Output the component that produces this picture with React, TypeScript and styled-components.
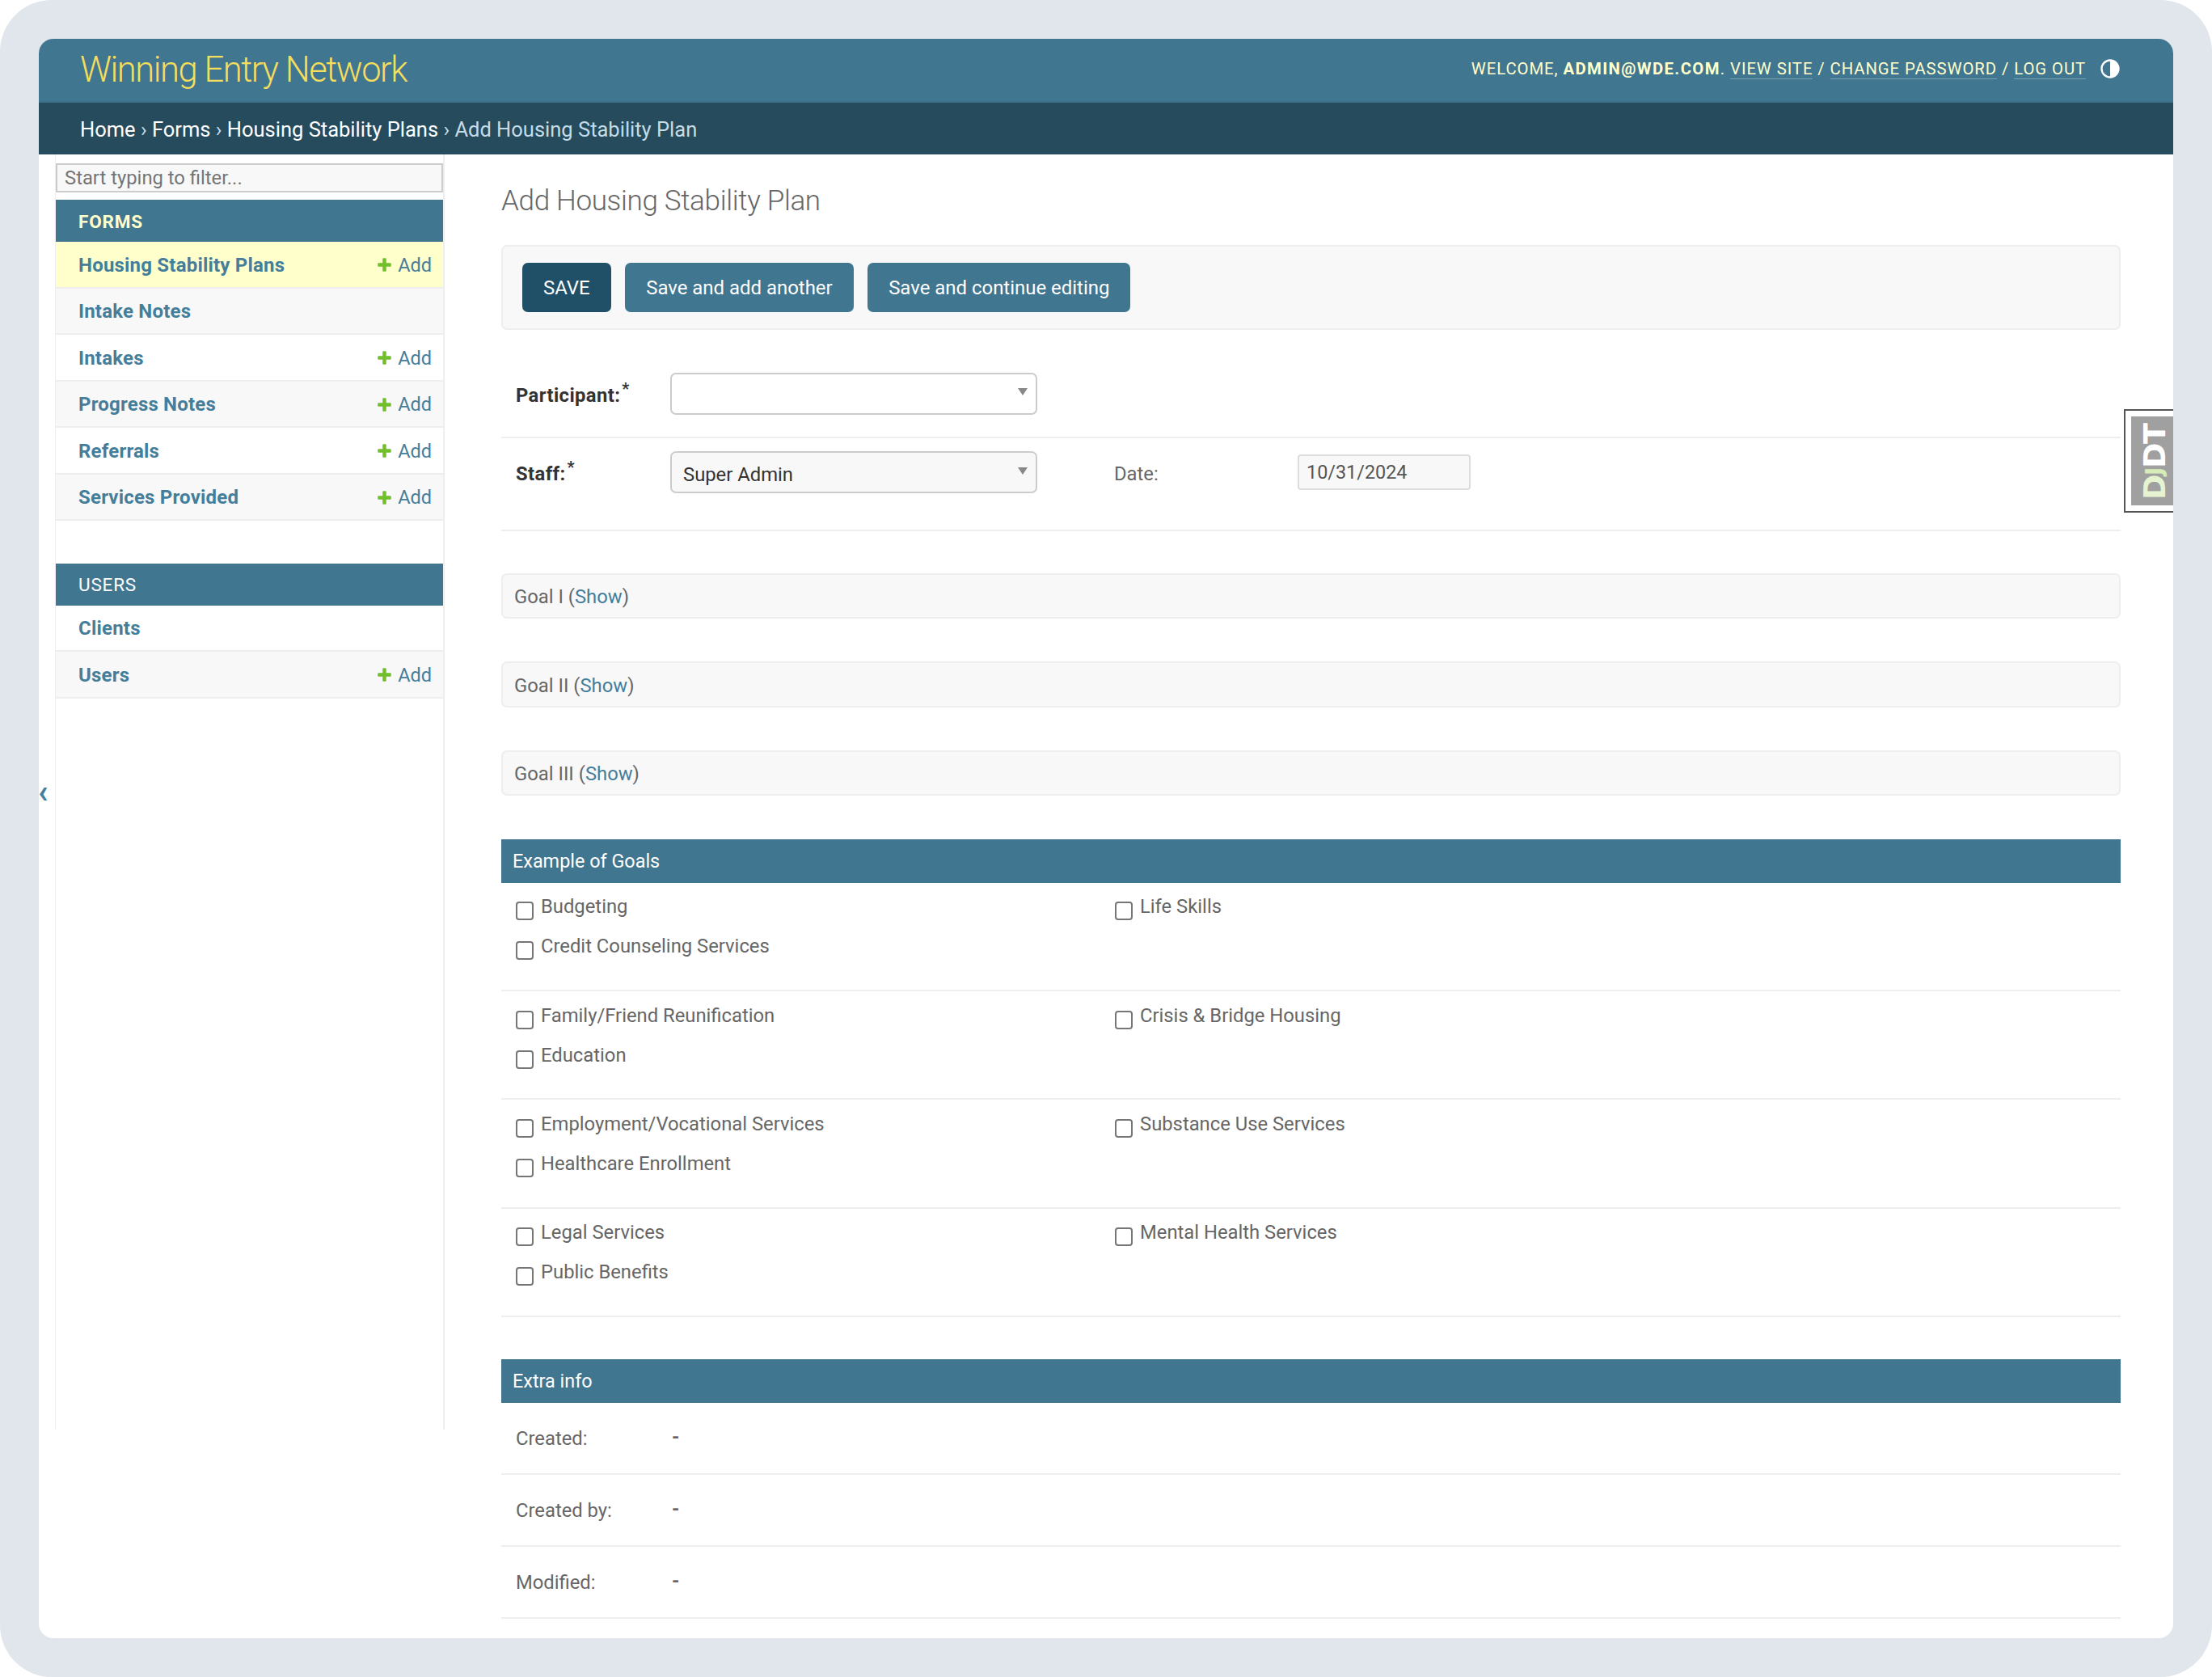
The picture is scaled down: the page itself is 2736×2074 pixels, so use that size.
import styled, { createGlobalStyle } from "styled-components";

const GlobalStyle = createGlobalStyle`
  html, body {
    margin: 0;
    padding: 0;
    background: #fff;
    overflow: hidden;
  }
  * {
    box-sizing: border-box;
  }
  body {
    font-family: Roboto, "Liberation Sans", sans-serif;
    font-size: 23.8px;
    color: #333;
  }
`;

const Frame = styled.div`
  width: 2736px;
  height: 2074px;
  padding: 48px;
  background: #e1e6ed;
  border-radius: 64px;
`;

const Card = styled.div`
  position: relative;
  height: 1978px;
  background: #fff;
  border-radius: 18px;
  overflow: hidden;
`;

const Header = styled.header`
  height: 79px;
  padding: 0 64px 0 51px;
  display: flex;
  align-items: center;
  justify-content: space-between;
  background: #417690;
  border-bottom: 2px solid #3c6f89;
`;

const Brand = styled.div`
  font-size: 43.5px;
  font-weight: 300;
  letter-spacing: -1.45px;
  color: #f5dd5d;
`;

const UserTools = styled.div`
  margin-top: -3px;
  display: flex;
  align-items: center;
  font-size: 20.3px;
  letter-spacing: 0.93px;
  text-transform: uppercase;
  color: #ffc;
  white-space: pre;
`;

const UserName = styled.strong`
  font-weight: 700;
  letter-spacing: 1.4px;
`;

const ToolLink = styled.a`
  color: #ffc;
  border-bottom: 1.5px solid rgba(255, 255, 255, 0.3);
`;

const ThemeIcon = styled.svg`
  width: 28px;
  height: 28px;
  margin-left: 16px;
  fill: #fff;
`;

const Breadcrumbs = styled.nav`
  height: 64px;
  padding: 2px 0 0 51px;
  display: flex;
  align-items: center;
  font-size: 25.5px;
  color: #c4dce8;
  background: #264b5d;
  white-space: pre;
`;

const Crumb = styled.a`
  color: #fff;
`;

const Main = styled.div`
  display: flex;
  align-items: flex-start;
`;

const ToggleColumn = styled.div`
  width: 20px;
  height: 1577px;
  display: flex;
  align-items: center;
  font-size: 40px;
  font-weight: 700;
  color: #447e9b;
`;

const ToggleGlyph = styled.span`
  margin: 0 0 0 -1px;
`;

const Sidebar = styled.aside`
  width: 482px;
  height: 1577px;
  padding-top: 11px;
  flex-shrink: 0;
  border-left: 1.5px solid #eee;
  border-right: 2px solid #eee;
`;

const FilterInput = styled.input`
  display: block;
  width: 100%;
  height: 36px;
  margin-bottom: 9px;
  padding: 0 9px;
  font-family: inherit;
  font-size: 23.8px;
  background: #f8f8f8;
  border: 2px solid #ccc;
  &::placeholder {
    color: #757575;
  }
`;

const Module = styled.section<{ $gap?: boolean }>`
  margin-top: ${(p) => (p.$gap ? "52.5px" : "0")};
`;

const Caption = styled.div<{ $current?: boolean }>`
  height: 52px;
  padding: 1px 0 0 28px;
  display: flex;
  align-items: center;
  font-size: 22.5px;
  letter-spacing: 0.8px;
  text-transform: uppercase;
  font-weight: ${(p) => (p.$current ? 700 : 400)};
  color: ${(p) => (p.$current ? "#ffc" : "#fff")};
  background: #417690;
`;

const ModelRow = styled.div<{ $bg: string }>`
  height: 57.5px;
  padding: 2px 14px 0 28px;
  display: flex;
  align-items: center;
  justify-content: space-between;
  color: #447e9b;
  background: ${(p) => p.$bg};
  border-bottom: 2px solid #eee;
`;

const ModelName = styled.a`
  font-weight: 700;
  font-size: 24px;
  letter-spacing: 0.2px;
`;

const AddLink = styled.a`
  display: flex;
  align-items: center;
  gap: 6px;
  font-size: 23.5px;
`;

const PlusIcon = styled.svg`
  width: 21px;
  height: 21px;
  fill: #70bf2b;
`;

const Content = styled.main`
  flex: 1;
  padding: 0 65px 0 70px;
`;

const Title = styled.h1`
  margin: 35px 0 31px;
  height: 46px;
  line-height: 46px;
  font-size: 35px;
  font-weight: 300;
  letter-spacing: -0.33px;
  color: #666;
`;

const SubmitRow = styled.div`
  height: 105px;
  padding: 0 24px;
  display: flex;
  align-items: center;
  gap: 17.5px;
  background: #f8f8f8;
  border: 2px solid #eee;
  border-radius: 7px;
`;

const SaveButton = styled.button<{ $primary?: boolean }>`
  height: 61px;
  padding: 0 26px;
  font-family: inherit;
  font-size: 23.95px;
  color: #fff;
  background: ${(p) => (p.$primary ? "#205067" : "#417690")};
  border: none;
  border-radius: 7px;
  text-transform: ${(p) => (p.$primary ? "uppercase" : "none")};
`;

const FormRow = styled.div<{ $first?: boolean }>`
  padding: ${(p) => (p.$first ? "52.5px 0 27px 18px" : "16.5px 0 45px 18px")};
  display: flex;
  align-items: flex-start;
  border-bottom: 2px solid #eee;
`;

const FieldLabel = styled.label<{ $required?: boolean }>`
  width: 191px;
  height: 52px;
  flex-shrink: 0;
  line-height: 56px;
  font-weight: ${(p) => (p.$required ? 700 : 400)};
  letter-spacing: ${(p) => (p.$required ? "0.4px" : "0")};
  color: ${(p) => (p.$required ? "#333" : "#666")};
`;

const RequiredMark = styled.sup`
  font-size: 20px;
  line-height: 0;
  margin-left: 2px;
  vertical-align: 9px;
`;

const SelectBox = styled.div<{ $filled?: boolean }>`
  width: 453.5px;
  height: 52px;
  padding: 5px 10px 0 14px;
  display: flex;
  align-items: center;
  justify-content: space-between;
  color: #333;
  background: ${(p) => (p.$filled ? "#f8f8f8" : "#fff")};
  border: 2px solid #ccc;
  border-radius: 7px;
`;

const SelectArrow = styled.span`
  margin-top: -9px;
  border-left: 6px solid transparent;
  border-right: 6px solid transparent;
  border-top: 9px solid #888;
`;

const DateLabel = styled(FieldLabel)`
  width: 227px;
  margin-left: 95.5px;
`;

const DateInput = styled.input`
  width: 214px;
  height: 44px;
  margin-top: 4px;
  padding: 0 9px 1px;
  font-family: inherit;
  font-size: 23.4px;
  color: #555;
  background: #f8f8f8;
  border: 2px solid #ddd;
  border-radius: 4px;
`;

const Collapsed = styled.div<{ $first?: boolean }>`
  height: 56.5px;
  margin-top: ${(p) => (p.$first ? "51.5px" : "53px")};
  padding: 3px 0 0 14px;
  display: flex;
  align-items: center;
  color: #666;
  background: #f8f8f8;
  border: 2px solid #eee;
  border-radius: 7px;
  white-space: pre;
`;

const ShowLink = styled.a`
  color: #447e9b;
`;

const SectionBar = styled.h2<{ $tight?: boolean }>`
  height: 54px;
  margin: ${(p) => (p.$tight ? "52.5px" : "54px")} 0 0;
  padding-left: 14px;
  display: flex;
  align-items: center;
  font-size: 23.4px;
  font-weight: 400;
  color: #fff;
  background: #417690;
`;

const CheckGroup = styled.div`
  padding: 19.4px 0 14.8px 18px;
  display: grid;
  grid-template-columns: 741px 1fr;
  grid-auto-rows: 49px;
  border-bottom: 2px solid #eee;
`;

const CheckItem = styled.label`
  display: flex;
  align-items: flex-start;
  gap: 9px;
  line-height: 21px;
  color: #666;
`;

const CheckBox = styled.input`
  appearance: none;
  width: 22px;
  height: 23px;
  margin: 4px 0 0;
  background: #fff;
  border: 2px solid #767676;
  border-radius: 4px;
`;

const InfoRow = styled.div`
  height: 89px;
  padding: 0 0 0 18px;
  display: flex;
  align-items: center;
  color: #666;
  border-bottom: 2px solid #eee;
`;

const InfoLabel = styled.span`
  width: 191px;
`;

const InfoValue = styled.span`
  margin: -4px 0 0 2px;
  font-weight: 700;
`;

const DebugHandle = styled.div`
  position: absolute;
  top: 458px;
  right: 0;
  padding: 7px 0 7px 7px;
  background: #fff;
  border: 2px solid #555;
  border-right: none;
`;

const DebugLabel = styled.div`
  width: 52px;
  height: 110px;
  padding: 0 6px 2px 0;
  display: flex;
  align-items: center;
  justify-content: center;
  writing-mode: vertical-rl;
  transform: rotate(180deg);
  font-family: "DejaVu Sans", sans-serif;
  font-size: 38px;
  font-weight: 700;
  letter-spacing: -1.5px;
  color: #fff;
  background: #a0a0a0;
`;

const DebugD = styled.span`
  color: #e5f3d0;
`;

const DebugJ = styled.span`
  font-size: 28px;
  color: #d6edb8;
`;

const forms = [
  { name: "Housing Stability Plans", add: true, bg: "#ffc" },
  { name: "Intake Notes", add: false, bg: "#f8f8f8" },
  { name: "Intakes", add: true, bg: "#fff" },
  { name: "Progress Notes", add: true, bg: "#f8f8f8" },
  { name: "Referrals", add: true, bg: "#fff" },
  { name: "Services Provided", add: true, bg: "#f8f8f8" },
];

const users = [
  { name: "Clients", add: false, bg: "#fff" },
  { name: "Users", add: true, bg: "#f8f8f8" },
];

const goalGroups = [
  ["Budgeting", "Life Skills", "Credit Counseling Services"],
  ["Family/Friend Reunification", "Crisis & Bridge Housing", "Education"],
  ["Employment/Vocational Services", "Substance Use Services", "Healthcare Enrollment"],
  ["Legal Services", "Mental Health Services", "Public Benefits"],
];

function ModelRows({ rows }: { rows: typeof forms }) {
  return (
    <>
      {rows.map((row) => (
        <ModelRow key={row.name} $bg={row.bg}>
          <ModelName>{row.name}</ModelName>
          {row.add && (
            <AddLink>
              <PlusIcon viewBox="0 0 1792 1792">
                <path d="M1600 796v192q0 40-28 68t-68 28h-416v416q0 40-28 68t-68 28h-192q-40 0-68-28t-28-68v-416h-416q-40 0-68-28t-28-68v-192q0-40 28-68t68-28h416v-416q0-40 28-68t68-28h192q40 0 68 28t28 68v416h416q40 0 68 28t28 68z" />
              </PlusIcon>
              Add
            </AddLink>
          )}
        </ModelRow>
      ))}
    </>
  );
}

export default function App() {
  return (
    <Frame>
      <GlobalStyle />
      <Card>
        <Header>
          <Brand>Winning Entry Network</Brand>
          <UserTools>
            Welcome, <UserName>admin@wde.com</UserName>.{" "}
            <ToolLink>View site</ToolLink> / <ToolLink>Change password</ToolLink> /{" "}
            <ToolLink>Log out</ToolLink>
            <ThemeIcon viewBox="0 0 24 24">
              <path d="M12 22C6.477 22 2 17.523 2 12S6.477 2 12 2s10 4.477 10 10-4.477 10-10 10zm0-2V4a8 8 0 1 0 0 16z" />
            </ThemeIcon>
          </UserTools>
        </Header>
        <Breadcrumbs>
          <Crumb>Home</Crumb> › <Crumb>Forms</Crumb> › <Crumb>Housing Stability Plans</Crumb> › Add
          Housing Stability Plan
        </Breadcrumbs>
        <Main>
          <ToggleColumn>
            <ToggleGlyph>‹</ToggleGlyph>
          </ToggleColumn>
          <Sidebar>
            <FilterInput placeholder="Start typing to filter..." />
            <Module>
              <Caption $current>Forms</Caption>
              <ModelRows rows={forms} />
            </Module>
            <Module $gap>
              <Caption>Users</Caption>
              <ModelRows rows={users} />
            </Module>
          </Sidebar>
          <Content>
            <Title>Add Housing Stability Plan</Title>
            <SubmitRow>
              <SaveButton $primary>Save</SaveButton>
              <SaveButton>Save and add another</SaveButton>
              <SaveButton>Save and continue editing</SaveButton>
            </SubmitRow>
            <FormRow $first>
              <FieldLabel $required>
                Participant:<RequiredMark>*</RequiredMark>
              </FieldLabel>
              <SelectBox>
                <span />
                <SelectArrow />
              </SelectBox>
            </FormRow>
            <FormRow>
              <FieldLabel $required>
                Staff:<RequiredMark>*</RequiredMark>
              </FieldLabel>
              <SelectBox $filled>
                Super Admin
                <SelectArrow />
              </SelectBox>
              <DateLabel>Date:</DateLabel>
              <DateInput defaultValue="10/31/2024" />
            </FormRow>
            {["Goal I", "Goal II", "Goal III"].map((goal, i) => (
              <Collapsed key={goal} $first={i === 0}>
                {goal} (<ShowLink>Show</ShowLink>)
              </Collapsed>
            ))}
            <SectionBar>Example of Goals</SectionBar>
            {goalGroups.map((group) => (
              <CheckGroup key={group[0]}>
                {group.map((item) => (
                  <CheckItem key={item}>
                    <CheckBox type="checkbox" />
                    {item}
                  </CheckItem>
                ))}
              </CheckGroup>
            ))}
            <SectionBar $tight>Extra info</SectionBar>
            {["Created:", "Created by:", "Modified:"].map((label) => (
              <InfoRow key={label}>
                <InfoLabel>{label}</InfoLabel>
                <InfoValue>-</InfoValue>
              </InfoRow>
            ))}
          </Content>
        </Main>
        <DebugHandle>
          <DebugLabel>
            <span>
              <DebugD>D</DebugD>
              <DebugJ>J</DebugJ>DT
            </span>
          </DebugLabel>
        </DebugHandle>
      </Card>
    </Frame>
  );
}
